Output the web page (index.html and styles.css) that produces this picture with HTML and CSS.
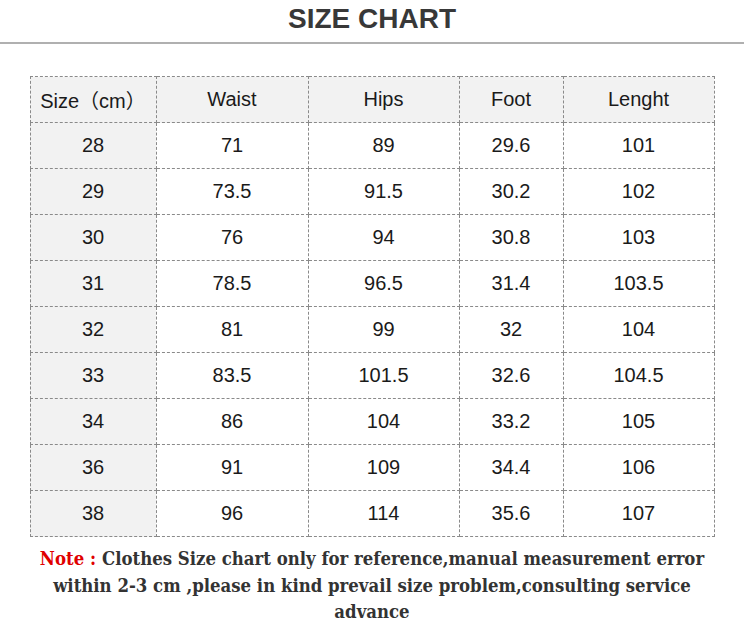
FILE: index.html
```html
<!DOCTYPE html>
<html>
<head>
<meta charset="utf-8">
<link rel="stylesheet" href="styles.css">
</head>
<body>
<div class="page">
  <h1 class="title">SIZE CHART</h1>
  <div class="rule"></div>
  <table class="chart">
    <thead>
      <tr><th class="c1">Size（cm）</th><th class="c2">Waist</th><th class="c3">Hips</th><th class="c4">Foot</th><th class="c5">Lenght</th></tr>
    </thead>
    <tbody>
      <tr><td class="first">28</td><td>71</td><td>89</td><td>29.6</td><td>101</td></tr>
      <tr><td class="first">29</td><td>73.5</td><td>91.5</td><td>30.2</td><td>102</td></tr>
      <tr><td class="first">30</td><td>76</td><td>94</td><td>30.8</td><td>103</td></tr>
      <tr><td class="first">31</td><td>78.5</td><td>96.5</td><td>31.4</td><td>103.5</td></tr>
      <tr><td class="first">32</td><td>81</td><td>99</td><td>32</td><td>104</td></tr>
      <tr><td class="first">33</td><td>83.5</td><td>101.5</td><td>32.6</td><td>104.5</td></tr>
      <tr><td class="first">34</td><td>86</td><td>104</td><td>33.2</td><td>105</td></tr>
      <tr><td class="first">36</td><td>91</td><td>109</td><td>34.4</td><td>106</td></tr>
      <tr><td class="first">38</td><td>96</td><td>114</td><td>35.6</td><td>107</td></tr>
    </tbody>
  </table>
  <p class="note"><span class="note-label">Note :</span>Clothes Size chart only for reference,manual measurement error within 2-3 cm ,please in kind prevail size problem,consulting service advance</p>
</div>
</body>
</html>
```
FILE: styles.css
```css
html, body {
  margin: 0;
  padding: 0;
  background: #fff;
}
.page {
  width: 744px;
  height: 634px;
  overflow: hidden;
  display: flex;
  flex-direction: column;
  align-items: center;
}
.title {
  margin: 0;
  padding-top: 3px;
  height: 39px;
  line-height: 32px;
  font-family: "Liberation Sans", Arial, sans-serif;
  font-weight: bold;
  font-size: 28px;
  color: #383838;
  text-align: center;
}
.rule {
  align-self: stretch;
  height: 2px;
  background: #b0b0b0;
}
.chart {
  margin-top: 32px;
  border-collapse: collapse;
  font-family: "Liberation Sans", Arial, "Noto Sans CJK SC", sans-serif;
  font-size: 20px;
  color: #1a1a1a;
}
.chart th, .chart td {
  border: 1px dashed #8a8a8a;
  height: 45px;
  padding: 0;
  text-align: center;
  font-weight: normal;
  vertical-align: middle;
}
.chart thead th {
  background: #f2f2f2;
}
.chart td.first {
  background: #f2f2f2;
}
.c1 { width: 125px; }
.c2 { width: 151px; }
.c3 { width: 150px; }
.c4 { width: 103px; }
.c5 { width: 150px; }
.note {
  margin: 9px 0 0;
  width: 700px;
  font-family: "DejaVu Serif Condensed", "DejaVu Serif", Georgia, serif;
  font-stretch: condensed;
  font-weight: bold;
  font-size: 18.4px;
  line-height: 26.5px;
  color: #333;
  text-align: center;
}
.note-label {
  display: inline-block;
  margin-right: 6px;
  color: #e00000;
}
```
